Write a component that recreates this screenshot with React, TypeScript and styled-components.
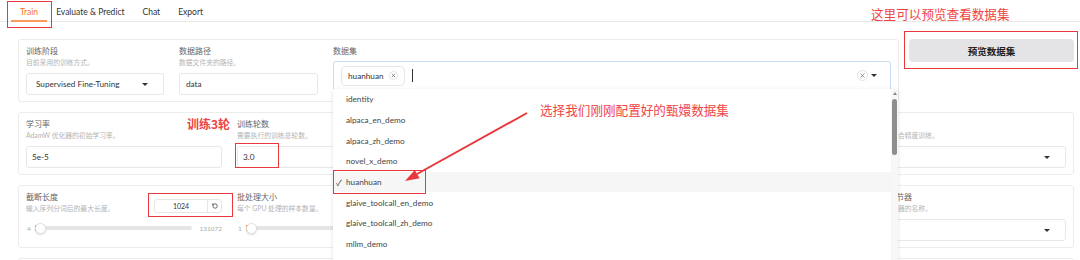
import React from "react";
import styled, { createGlobalStyle } from "styled-components";
import { RotateCcw, X } from "lucide-react";

const Global = createGlobalStyle`
  html, body { margin: 0; padding: 0; background: #fff; }
  body { font-family: "Lato", "Noto Sans CJK SC", sans-serif; }
  * { box-sizing: border-box; }
`;

const RED = "#e8383d";
const CJK = `"Noto Sans CJK SC", sans-serif`;

const Page = styled.div`
  position: relative;
  width: 1080px;
  height: 260px;
  overflow: hidden;
  background: #fff;
`;

const TabBar = styled.div`
  display: flex;
  height: 22px;
  padding-left: 11px;
  border-bottom: 1px solid #e8e8e8;
`;

const Tab = styled.div<{ $active?: boolean }>`
  height: 22px;
  margin-bottom: -1px;
  padding: 3px 9px 0;
  display: flex;
  align-items: center;
  font-size: 8.5px;
  color: ${(p) => (p.$active ? "#f97316" : "#333")};
  border-bottom: 2px solid ${(p) => (p.$active ? "#fb9a5a" : "transparent")};
`;

const Content = styled.div`
  display: flex;
  flex-direction: column;
  gap: 10px;
  padding: 17px 6px 0 18px;
`;

const TopRow = styled.div`
  display: flex;
  align-items: flex-start;
  gap: 10px;
`;

const Panel = styled.div<{ $w?: number }>`
  ${(p) => (p.$w ? `flex: 0 0 ${p.$w}px;` : "")}
  border: 1px solid #ececec;
  border-radius: 3px;
  padding: 5px 7px 6px;
  background: #fff;
`;

const Grid3 = styled.div`
  display: grid;
  grid-template-columns: 138px 139px 1fr;
  column-gap: 15px;
`;

const Grid5 = styled.div`
  display: grid;
  grid-template-columns: 196px 196px 193px 193px 202px;
  column-gap: 15px;
`;

const Field = styled.div`
  display: flex;
  flex-direction: column;
  position: relative;
`;

const Label = styled.div`
  font-family: ${CJK};
  font-size: 8px;
  line-height: 11px;
  color: #666;
  white-space: nowrap;
`;

const Desc = styled.div`
  font-family: "Lato", "Noto Sans CJK SC", sans-serif;
  font-size: 6.8px;
  line-height: 9px;
  margin-top: 2px;
  color: #b4b4b4;
  white-space: nowrap;
`;

const InputBox = styled.div<{ $pad?: number }>`
  margin-top: 6px;
  height: 22px;
  border: 1px solid #e8e8e8;
  border-radius: 3px;
  display: flex;
  align-items: center;
  justify-content: space-between;
  padding: 0 15px 0 ${(p) => p.$pad ?? 5}px;
  font-size: 8.2px;
  color: #333;
  white-space: nowrap;
`;

const Caret = styled.span`
  width: 0;
  height: 0;
  border-left: 3px solid transparent;
  border-right: 3px solid transparent;
  border-top: 3.5px solid #333;
`;

const MultiBox = styled.div`
  position: relative;
  margin-top: 5px;
  height: 29px;
  border: 1px solid #c9def6;
  border-radius: 3px 3px 0 0;
  display: flex;
  align-items: center;
  padding: 0 13px 0 7px;
`;

const Chip = styled.div`
  height: 20px;
  display: flex;
  align-items: center;
  gap: 5px;
  padding: 0 6px 0 6px;
  border: 1px solid #e6e6e6;
  border-radius: 4px;
  font-size: 8.2px;
  color: #333;
`;

const CircleX = styled.span<{ $d: number }>`
  width: ${(p) => p.$d}px;
  height: ${(p) => p.$d}px;
  border-radius: 50%;
  border: 1px solid #e2e2e2;
  display: inline-flex;
  align-items: center;
  justify-content: center;
  color: #555;
`;

const Cursor = styled.span`
  width: 1px;
  height: 13px;
  background: #333;
  margin-left: 7px;
`;

const MultiEnd = styled.div`
  margin-left: auto;
  display: flex;
  align-items: center;
  gap: 3px;
`;

const List = styled.div`
  position: absolute;
  top: 100%;
  left: -1px;
  width: calc(100% + 9px);
  height: 200px;
  background: #fff;
  box-shadow: 0 1px 4px rgba(0, 0, 0, 0.12);
  z-index: 5;
  padding-right: 7px;
`;

const Item = styled.div<{ $sel?: boolean }>`
  height: 20.7px;
  display: flex;
  align-items: center;
  padding-left: 3px;
  font-size: 8.2px;
  color: #444;
  background: ${(p) => (p.$sel ? "#f6f6f6" : "transparent")};
`;

const Check = styled.span<{ $on?: boolean }>`
  width: 10px;
  font-size: 8.5px;
  visibility: ${(p) => (p.$on ? "visible" : "hidden")};
`;

const ScrollTrack = styled.div`
  position: absolute;
  top: 0;
  right: 0;
  width: 7px;
  height: 100%;
  background: #f7f7f7;
  display: flex;
  flex-direction: column;
  align-items: center;
`;

const ScrollArrow = styled.span`
  margin-top: 3px;
  width: 0;
  height: 0;
  border-left: 2px solid transparent;
  border-right: 2px solid transparent;
  border-bottom: 3px solid #888;
`;

const ScrollThumb = styled.span`
  margin-top: 4px;
  width: 5px;
  height: 56px;
  border-radius: 3px;
  background: #8e8e8e;
`;

const PreviewBtn = styled.button`
  flex: 1;
  height: 23px;
  border: none;
  border-radius: 4px;
  background: #e4e4e7;
  font-family: ${CJK};
  font-size: 9.5px;
  font-weight: 700;
  color: #222;
  padding: 0;
`;

const HeadRow = styled.div`
  display: flex;
  justify-content: space-between;
  align-items: flex-start;
`;

const NumBox = styled.div`
  margin-top: 8px;
  width: 68px;
  height: 14px;
  border: 1px solid #e6e6e6;
  border-radius: 3px;
  display: flex;
`;

const NumVal = styled.span`
  flex: 1;
  display: flex;
  align-items: center;
  justify-content: center;
  font-size: 7px;
  color: #333;
`;

const ResetBtn = styled.span`
  width: 14px;
  border-left: 1px solid #e6e6e6;
  display: flex;
  align-items: center;
  justify-content: center;
  color: #444;
`;

const SliderRow = styled.div`
  margin-top: 9px;
  height: 12px;
  display: flex;
  align-items: center;
  font-size: 6.5px;
  color: #aaa;
`;

const MinLbl = styled.span`
  width: 9px;
  padding-left: 1px;
`;

const Track = styled.div`
  position: relative;
  flex: 1;
  height: 4px;
  border-radius: 2px;
  background: #e5e5e5;
`;

const Fill = styled.span`
  position: absolute;
  left: 0;
  top: -1px;
  width: 3px;
  height: 6px;
  border-radius: 1px;
  background: #f97316;
`;

const Thumb = styled.span`
  position: absolute;
  left: 0;
  top: -3.5px;
  width: 11px;
  height: 11px;
  border-radius: 50%;
  background: #fff;
  border: 1px solid #e0e0e0;
  box-shadow: 0 1px 2px rgba(0, 0, 0, 0.12);
`;

const MaxLbl = styled.span`
  margin-left: 7px;
`;

const BottomPanel = styled(Panel)`
  height: 40px;
`;

/* annotations (overlays) */
const RedBox = styled.div<{ $x: number; $y: number; $w: number; $h: number }>`
  position: absolute;
  left: ${(p) => p.$x}px;
  top: ${(p) => p.$y}px;
  width: ${(p) => p.$w}px;
  height: ${(p) => p.$h}px;
  border: 1.5px solid ${RED};
  z-index: 10;
  pointer-events: none;
`;

const Note = styled.div<{ $x: number; $y: number; $size: number; $bold?: boolean }>`
  position: absolute;
  left: ${(p) => p.$x}px;
  top: ${(p) => p.$y}px;
  font-family: ${CJK};
  font-size: ${(p) => p.$size}px;
  line-height: 1;
  font-weight: ${(p) => (p.$bold ? 700 : 400)};
  color: #ef4545;
  white-space: nowrap;
  z-index: 10;
`;

const ArrowSvg = styled.svg`
  position: absolute;
  left: 0;
  top: 0;
  z-index: 11;
  pointer-events: none;
`;

const datasets = [
  "identity",
  "alpaca_en_demo",
  "alpaca_zh_demo",
  "novel_x_demo",
  "huanhuan",
  "glaive_toolcall_en_demo",
  "glaive_toolcall_zh_demo",
  "mllm_demo",
];

function SliderField(props: { label: string; desc: string; value?: string; min: string; max?: string }) {
  return (
    <Field>
      <HeadRow>
        <div>
          <Label>{props.label}</Label>
          <Desc>{props.desc}</Desc>
        </div>
        <NumBox>
          <NumVal>{props.value}</NumVal>
          <ResetBtn>
            <RotateCcw size={6} strokeWidth={3} />
          </ResetBtn>
        </NumBox>
      </HeadRow>
      <SliderRow>
        <MinLbl>{props.min}</MinLbl>
        <Track>
          <Fill />
          <Thumb />
        </Track>
        <MaxLbl>{props.max}</MaxLbl>
      </SliderRow>
    </Field>
  );
}

function TextField(props: { label: string; desc: string; value: string; select?: boolean; pad?: number }) {
  return (
    <Field>
      <Label>{props.label}</Label>
      <Desc>{props.desc}</Desc>
      <InputBox $pad={props.pad}>
        <span>{props.value}</span>
        {props.select && <Caret />}
      </InputBox>
    </Field>
  );
}

export default function App() {
  return (
    <Page>
      <Global />
      <TabBar>
        <Tab $active>Train</Tab>
        <Tab>Evaluate &amp; Predict</Tab>
        <Tab>Chat</Tab>
        <Tab>Export</Tab>
      </TabBar>
      <Content>
        <TopRow>
          <Panel $w={881}>
            <Grid3>
              <TextField label="训练阶段" desc="目前采用的训练方式。" value="Supervised Fine-Tuning" select pad={9} />
              <TextField label="数据路径" desc="数据文件夹的路径。" value="data" pad={6} />
              <Field>
                <Label>数据集</Label>
                <MultiBox>
                  <Chip>
                    huanhuan
                    <CircleX $d={9}>
                      <X size={5} strokeWidth={3} />
                    </CircleX>
                  </Chip>
                  <Cursor />
                  <MultiEnd>
                    <CircleX $d={11}>
                      <X size={7} strokeWidth={2} />
                    </CircleX>
                    <Caret />
                  </MultiEnd>
                  <List>
                    {datasets.map((d) => (
                      <Item key={d} $sel={d === "huanhuan"}>
                        <Check $on={d === "huanhuan"}>✓</Check>
                        {d}
                      </Item>
                    ))}
                    <ScrollTrack>
                      <ScrollArrow />
                      <ScrollThumb />
                    </ScrollTrack>
                  </List>
                </MultiBox>
              </Field>
            </Grid3>
          </Panel>
          <PreviewBtn>预览数据集</PreviewBtn>
        </TopRow>

        <Panel>
          <Grid5>
            <TextField label="学习率" desc="AdamW 优化器的初始学习率。" value="5e-5" />
            <TextField label="训练轮数" desc="需要执行的训练总轮数。" value="3.0" />
            <div />
            <div />
            <TextField label="计算类型" desc="是否使用混合精度训练。" value="" select pad={9} />
          </Grid5>
        </Panel>

        <Panel>
          <Grid5>
            <SliderField label="截断长度" desc="输入序列分词后的最大长度。" value="1024" min="4" max="131072" />
            <SliderField label="批处理大小" desc="每个 GPU 处理的样本数量。" min="1" />
            <div />
            <div />
            <TextField label="学习率调节器" desc="学习率调度器的名称。" value="" select pad={9} />
          </Grid5>
        </Panel>

        <BottomPanel />
      </Content>

      <RedBox $x={7} $y={1} $w={45} $h={27} />
      <RedBox $x={904} $y={31} $w={174} $h={38} />
      <RedBox $x={235} $y={143} $w={44} $h={25} />
      <RedBox $x={148} $y={193} $w={85} $h={24} />
      <RedBox $x={333} $y={170} $w={93} $h={24} />

      <Note $x={871} $y={8} $size={12.6}>这里可以预览查看数据集</Note>
      <Note $x={187} $y={118} $size={12} $bold>训练3轮</Note>
      <Note $x={540} $y={104} $size={12.6}>选择我们刚刚配置好的甄嬛数据集</Note>

      <ArrowSvg width={1080} height={260} viewBox="0 0 1080 260">
        <line x1={527} y1={113} x2={417} y2={174} stroke={RED} strokeWidth={2} />
        <polygon points="405,181 419.6,178.3 414.8,170.1" fill={RED} />
      </ArrowSvg>
    </Page>
  );
}
